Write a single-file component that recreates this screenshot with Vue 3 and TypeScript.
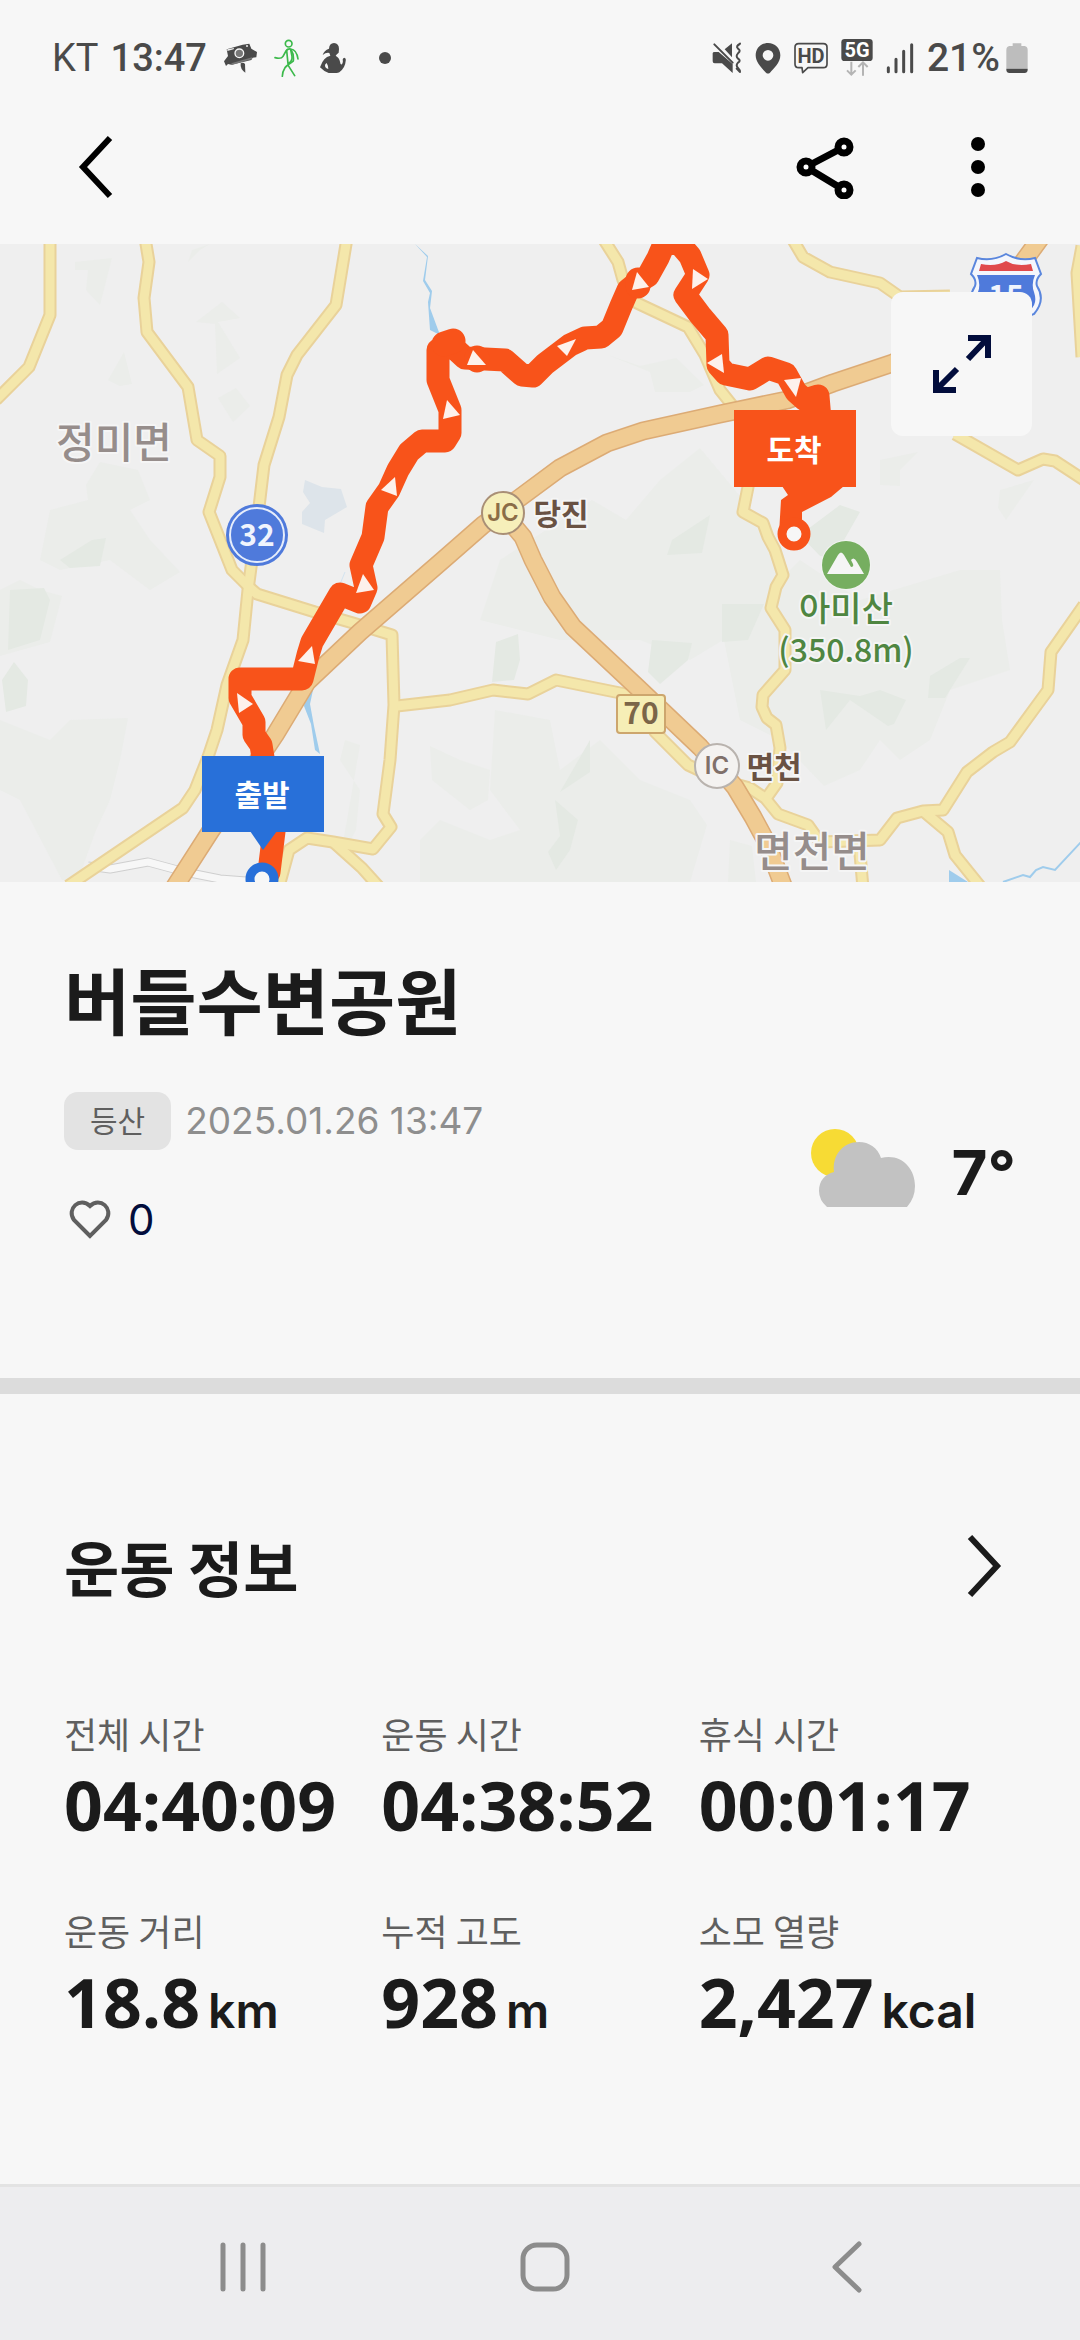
<script setup lang="ts">
interface Stat {
  label: string
  value: string
  unit?: string
}

const stats: Stat[] = [
  { label: '전체 시간', value: '04:40:09' },
  { label: '운동 시간', value: '04:38:52' },
  { label: '휴식 시간', value: '00:01:17' },
  { label: '운동 거리', value: '18.8', unit: 'km' },
  { label: '누적 고도', value: '928', unit: 'm' },
  { label: '소모 열량', value: '2,427', unit: 'kcal' },
]

const hills: string[] = [
  '75,262 112,258 100,305 86,290 88,270 75,270',
  '188,262 192,250 210,244 200,250',
  '196,322 222,302 240,318 218,322 240,358 217,374 215,324',
  '108,380 124,352 132,384 120,386',
  '218,398 236,388 250,406 233,422',
  '86,485 100,462 138,470 150,500 130,510 150,540 180,572 150,590 110,560 60,570 40,560 50,510 88,500',
  '0,590 20,580 40,590 62,596 50,642 0,656',
  '0,720 50,740 70,720 128,718 120,760 110,800 96,830 78,880 62,880 20,800 0,790',
  '608,355 640,366 676,358 704,385 690,392 655,392 650,372',
  '592,500 626,520 660,480 700,448 760,520 790,600 690,660 640,640 560,640 480,620 500,560',
  '880,460 918,452 900,470 900,486 880,485',
  '1000,490 1034,480 1020,500 1006,520 998,508',
  '720,620 770,590 800,560 860,600 960,570 1000,570 1002,620 1010,670 950,690 930,740 900,760 880,740 860,770 824,786 780,740 740,720',
  '430,746 460,760 490,770 488,800 470,810 432,780',
  '495,710 550,720 560,770 600,740 640,780 690,800 707,825 690,882 420,882 420,840 440,820 490,840 520,830 490,790',
  '730,840 752,846 756,882 728,882',
  '340,860 356,830 360,790 340,760 345,740 360,745',
]

const deepHills: string[] = [
  '60,560 92,540 106,538 100,566 70,568',
  '2,680 14,662 28,680 26,706 6,712',
  '10,590 44,588 50,600 40,640 8,650',
  '667,555 672,540 710,515 702,553',
  '496,642 518,634 520,660 514,680 492,682',
  '652,640 692,643 688,660 660,684 648,672',
  '560,792 590,740 590,772',
  '555,800 578,820 570,850 556,870 548,852 560,836',
  '800,535 840,505 860,512 844,540 860,560 820,556',
  '722,604 764,604 748,640 722,642',
  '820,690 860,696 880,690 906,700 894,724 888,726 850,700 826,730',
  '930,676 960,658 970,658 945,698 928,698',
]

const yellowRoads: string[] = [
  'M50 238V315L29 367L-4 400',
  'M145 238L149 262L144 298L147 332L188 387L197 440L220 456V477L209 512L232 570L249 587L257 594L315 612L353 623L392 635L394 705L390 760L383 814L391 827L373 849L333 842L307 838L289 850L278 890',
  'M333 842L362 868L380 888',
  'M347 238L336 305L297 355L287 375L279 417L264 465L259 507L248 590L243 640L227 685L217 730L208 757L195 790L183 808L68 886',
  'M397 706L450 700L493 690L528 694L556 680L640 697L655 732L688 765L720 780L750 788L765 798L778 814L808 825L820 842L880 840L897 818L923 811L943 810L967 772L993 752L1010 742L1048 690L1051 652L1084 605',
  'M923 811L948 832L955 855L980 886',
  'M859 842L863 888',
  'M604 240L618 262L623 280L637 303L688 327L705 355L720 390L732 405L752 440L748 487L743 512L763 523L768 537L775 550L783 575L776 587L771 608L785 630V670L763 695L762 707L767 718L776 725L780 748L777 783L765 800',
  'M793 240L803 257L830 272L880 283L900 297L950 296',
  'M955 434L1018 470L1043 459L1055 461L1084 480',
  'M1082 246L1077 273L1082 357',
]

const orangeRoads: string[] = [
  'M174 888L210 832L275 735L307 682L360 632L443 560L483 525L560 468L607 443L643 431L720 414L787 400L833 383L893 363L960 330L1010 280L1042 236',
  'M503 513L523 537L533 560L552 597L573 627L637 687L700 747L717 766L735 787L753 817L767 843L784 888',
]

/* Direction markers along the route */
const arrows: string[] = [
  '237,693 253,704 239,713',
  '312,646 315,664 298,661',
  '363,574 374,590 356,593',
  '395,477 397,496 381,490',
  '447,400 460,415 443,419',
  '473,350 486,365 467,365',
  '557,346 576,339 567,356',
  '637,272 649,287 632,290',
  '693,269 708,279 692,289',
  '707,363 722,354 724,373',
  '784,380 801,378 796,397',
]
</script>

<template>
  <div class="screen">
    <div class="status">
      <div class="status-side">
        <span class="carrier">KT</span>
        <span class="clock">13:47</span>
        <svg class="cam" width="33" height="32" viewBox="0 0 99 96" aria-hidden="true">
          <path d="M8 22L56 8L76 5L82 20L99 30L97 46L86 47L82 54L22 68L12 66L6 72L0 58L12 42Z" fill="#4a4a4a" />
          <path d="M22 64L84 46V51L24 69Z" fill="#777" />
          <path d="M10 22L30 18L29 22L10 27Z" fill="#eee" />
          <circle cx="46" cy="34" r="13" fill="#777" stroke="#f7f7f7" stroke-width="4" />
          <circle cx="69" cy="12" r="3" fill="#eee" />
          <path d="M50 64Q58 60 63 66L64 92Q48 82 50 64Z" fill="#4a4a4a" />
        </svg>
        <svg class="walk" width="25" height="38" viewBox="0 0 75 114" fill="none" stroke="#3cb94b" stroke-width="5" stroke-linecap="round" stroke-linejoin="round" aria-hidden="true">
          <circle cx="44" cy="14" r="10" />
          <path d="M3 56Q22 61 27 52L36 36Q40 29 50 30Q68 32 72 60" />
          <path d="M38 34L42 74Q56 66 54 52L50 32" />
          <path d="M52 34Q60 46 58 66Q40 78 33 86Q25 98 25 112M43 80L62 110" />
        </svg>
        <svg class="figure" width="27" height="30" viewBox="0 0 81 90" aria-hidden="true">
          <path d="M27 17Q28 1 42 0Q57 1 57 18L56 29Q50 33 47 38Q58 44 60 56Q61 66 66 64Q70 58 68 50Q68 45 73 44Q79 46 77 54Q76 74 58 88Q50 91 40 90H26Q10 84 0 73Q6 56 13 49Q20 40 31 38L28 30Q18 28 8 36Q12 22 27 17ZM16 64Q12 74 25 78Q24 66 20 60Z" fill="#4a4a4a" fill-rule="evenodd" />
        </svg>
        <span class="dot"></span>
      </div>
      <div class="status-side right">
        <svg width="30" height="32" viewBox="0 0 90 96" aria-hidden="true">
          <path d="M2 34Q2 30 8 30H20L62 66V93L30 64H8Q2 64 2 58ZM38 22L60 4V46Z" fill="#4a4a4a" />
          <path d="M7 7L62 62" stroke="#4a4a4a" stroke-width="6" stroke-linecap="round" />
          <path d="M84 5Q70 12 78 20Q88 26 78 34Q70 42 78 50Q88 56 78 62Q70 70 78 78Q84 84 84 90M84 5L76 12M84 90L74 80" fill="none" stroke="#4a4a4a" stroke-width="6" stroke-linecap="round" />
        </svg>
        <svg width="26" height="32" viewBox="0 0 78 96" aria-hidden="true">
          <path d="M39 3C18 3 2 19 2 40C2 62 22 80 33 92Q39 97 45 92C56 80 76 62 76 40C76 19 60 3 39 3ZM39 24A16 16 0 1 1 39 56A16 16 0 1 1 39 24Z" fill="#4a4a4a" fill-rule="evenodd" />
        </svg>
        <svg width="34" height="32" viewBox="0 0 102 96" aria-hidden="true">
          <path d="M14 5H88Q99 5 99 16V66Q99 77 88 77H42L26 92L24 77H14Q3 77 3 66V16Q3 5 14 5Z" fill="none" stroke="#4a4a4a" stroke-width="5" stroke-linejoin="round" />
          <text x="51" y="63" text-anchor="middle" class="hd">HD</text>
        </svg>
        <svg width="32" height="38" viewBox="0 0 96 114" aria-hidden="true">
          <rect x="1" y="0" width="94" height="66" rx="10" fill="#4a4a4a" />
          <text x="48" y="55" text-anchor="middle" class="five">5G</text>
          <path d="M31 68V106M18 94L31 107L44 94M66 110V70M52 84L66 70L80 84" fill="none" stroke="#b4b4b4" stroke-width="6" />
        </svg>
        <svg width="28" height="32" viewBox="0 0 84 96" aria-hidden="true">
          <path d="M7 77V89M30 52V89M53 28V89M77 8V89" stroke="#4a4a4a" stroke-width="9" stroke-linecap="round" />
        </svg>
        <span class="battery">
          21%
          <svg width="22" height="32" viewBox="0 0 66 96" aria-hidden="true">
            <path d="M20 4H46V12H56Q65 14 65 24V80H1V24Q1 14 10 12H20Z" fill="#bdbdbd" />
            <path d="M1 80H65V84Q64 93 56 93H10Q2 93 1 84Z" fill="#4a4a4a" />
          </svg>
        </span>
      </div>
    </div>

    <header class="bar">
      <button type="button" class="icon-btn" aria-label="뒤로">
        <svg width="36" height="64" viewBox="0 0 36 64"><path d="M32 3L5 32L32 61" fill="none" stroke="#000" stroke-width="6" /></svg>
      </button>
      <div class="actions">
        <button type="button" class="icon-btn" aria-label="공유">
          <svg width="60" height="64" viewBox="0 0 60 64" fill="none" stroke="#000">
            <path d="M11 32L49 12M11 32L49 55" stroke-width="7" />
            <g fill="#fff" stroke-width="7">
              <circle cx="11" cy="32" r="6" /><circle cx="49" cy="12" r="6" /><circle cx="49" cy="55" r="6" />
            </g>
          </svg>
        </button>
        <button type="button" class="icon-btn" aria-label="더보기">
          <svg width="14" height="64" viewBox="0 0 14 64"><circle cx="7" cy="9" r="7" /><circle cx="7" cy="32" r="7" /><circle cx="7" cy="55" r="7" /></svg>
        </button>
      </div>
    </header>

    <section class="map">
      <svg class="map-canvas" viewBox="0 244 1080 638" role="img" aria-label="운동 경로 지도">
        <rect y="244" width="1080" height="638" fill="#efefef" />
        <g fill="#ebedea"><polygon v-for="p in hills" :key="p" :points="p" /></g>
        <g fill="#e4e9e3"><polygon v-for="p in deepHills" :key="p" :points="p" /></g>
        <path d="M305 480L322 487L341 489L347 507L325 520L324 533L302 524V512L310 503L303 492Z" fill="#dde4ea" />
        <g fill="#9fccec">
          <path d="M415 244L428 256L425 280L432 291L430 308L440 335L430 330L428 302L430 293L423 281L427 257Z" />
          <path d="M306 690L313 690L310 704L314 726L320 754L315 750L311 724L304 706Z" />
          <path d="M949 870L968 882H949Z" />
        </g>
        <path d="M306 690L315 645L345 572" fill="none" stroke="#d4e4f0" stroke-width="1" />
        <path d="M1003 882L1023 875L1030 877L1036 870L1043 867L1055 870L1082 841" fill="none" stroke="#9fccec" stroke-width="2" />
        <g fill="none" stroke-linejoin="round">
          <path d="M88 866L110 869L148 862L185 872L220 879L260 882" stroke="#cfcfcf" stroke-width="9" />
          <path d="M88 866L110 869L148 862L185 872L220 879L260 882" stroke="#f7f7f7" stroke-width="7" />
          <path v-for="d in yellowRoads" :key="d" :d="d" stroke="#e9d29a" stroke-width="13" />
          <path v-for="d in yellowRoads" :key="'f' + d" :d="d" stroke="#f4e7ab" stroke-width="9" />
          <path v-for="d in orangeRoads" :key="d" :d="d" stroke="#dcab75" stroke-width="19" />
          <path v-for="d in orangeRoads" :key="'f' + d" :d="d" stroke="#f0cb92" stroke-width="16" />
        </g>

        <g class="place">
          <text x="114" y="458" text-anchor="middle">정미면</text>
          <text x="812" y="867" text-anchor="middle">면천면</text>
        </g>
        <g class="junction">
          <text x="561" y="525" text-anchor="middle">당진</text>
          <text x="774" y="778" text-anchor="middle">면천</text>
        </g>
        <g class="peak">
          <circle cx="846" cy="565" r="25" fill="#f3f5f2" />
          <circle cx="846" cy="565" r="24" fill="#76ae60" />
          <path d="M827 574L838 555Q841 550 844 555L851 567Q854 567 853 564L851 560Q854 556 857 562L864 574Z" fill="#f5f5f5" />
          <text class="peak-text" x="846" y="621" text-anchor="middle">아미산</text>
          <text class="peak-text peak-height" x="846" y="662" text-anchor="middle">(350.8m)</text>
        </g>

        <circle cx="257" cy="535" r="31" fill="#4f7adb" />
        <circle cx="257" cy="535" r="27" fill="#4f7adb" stroke="#e6edfb" stroke-width="2" />
        <text class="shield-text" x="257" y="546" text-anchor="middle">32</text>
        <circle cx="503" cy="513" r="21" fill="#f6efba" stroke="#a98f76" stroke-width="2" />
        <text class="jc" x="503" y="521" text-anchor="middle">JC</text>
        <circle cx="717" cy="766" r="22" fill="#f4f2f0" stroke="#b9b3ae" stroke-width="2" />
        <text class="ic" x="717" y="774" text-anchor="middle">IC</text>
        <rect x="617" y="695" width="48" height="38" rx="3" fill="#f6eeb6" stroke="#cda66d" stroke-width="2" />
        <text class="route-no" x="641" y="724" text-anchor="middle">70</text>
        <path d="M977 258Q992 262 1006 254Q1020 262 1035 258L1041 274Q1035 280 1037 286Q1046 300 1034 314L1006 326L978 314Q966 300 975 286Q977 280 971 274Z" fill="#f4f6fc" stroke="#5a86dd" stroke-width="2" />
        <path d="M977 275H1035Q1031 284 1034 292Q1038 304 1030 310L1006 320L982 310Q974 304 978 292Q981 284 977 275Z" fill="#4f7adb" />
        <path d="M979 271L981 264Q996 267 1006 261Q1016 267 1031 264L1033 271Z" fill="#e0494c" />
        <text class="shield-text" x="1006" y="307" text-anchor="middle">15</text>

        <g fill="none" stroke="#f8531a" stroke-linejoin="round" stroke-linecap="round">
          <path d="M269 872L276 815L265 770L261 745L254 735V722L240 698V679H302L308 655L312 642L340 594L360 602L366 588L361 565L373 537L377 507L389 490L398 470L409 452L422 441H445L450 433V410L438 380V350L452 346L465 358L505 360L522 375L533 376L545 364L570 345L585 338L601 337L612 328L621 306L628 290L638 282L648 276L658 258L664 244L678 242L690 256L698 275L685 295L700 315L717 335L718 365L726 374L750 379L768 368L786 374L796 392L805 400L818 396L820 420L838 450" stroke-width="23" />
          <path d="M638 280V286M477 358V360M444 344L453 341" stroke-width="25" />
        </g>
        <path d="M782 486H844L831 497L802 512V526L779 534L781 500L788 495Z" fill="#f8531a" />
        <g fill="#fdf1ec"><polygon v-for="p in arrows" :key="p" :points="p" /></g>
        <circle cx="794" cy="534" r="12" fill="#f7f7f7" stroke="#f8531a" stroke-width="9" />
        <path d="M250 831H277L263 850Z" fill="#2870d9" />
        <circle cx="262" cy="879" r="12" fill="#f7f7f7" stroke="#2870d9" stroke-width="9" />
        <rect x="202" y="756" width="122" height="76" fill="#2870d9" />
        <rect x="734" y="410" width="122" height="77" fill="#f8531a" />
        <g class="pin">
          <text x="262" y="806" text-anchor="middle">출발</text>
          <text x="794" y="461" text-anchor="middle">도착</text>
        </g>
      </svg>
      <button type="button" class="expand" aria-label="지도 확대">
        <svg width="60" height="60" viewBox="0 0 60 60" fill="none" stroke="#020d3c" stroke-width="6">
          <path d="M36 4H56V24M55 5L36 25M4 36V56H24M5 55L25 35" />
        </svg>
      </button>
    </section>

    <section class="info">
      <h1>버들수변공원</h1>
      <div class="info-body">
        <div class="meta">
          <div class="meta-line">
            <span class="tag">등산</span>
            <time datetime="2025-01-26T13:47">2025.01.26 13:47</time>
          </div>
          <button type="button" class="like" aria-label="좋아요 0">
            <svg width="44" height="42" viewBox="0 0 44 42"><path d="M22 37L6 21C-2 10 12 -3 22 7C32 -3 46 10 38 21Z" fill="none" stroke="#5f5f5f" stroke-width="4" /></svg>
            <span>0</span>
          </button>
        </div>
        <div class="weather">
          <svg width="104" height="78" viewBox="0 0 104 78" aria-hidden="true">
            <circle cx="24" cy="24" r="24" fill="#f7db34" />
            <path d="M16 78Q8 71 8 62C8 52 14 45 23 43C21 26 32 13 48 13C58 13 67 19 70 29C90 24 104 39 104 57Q104 69 96 78Z" fill="#c2c2c2" />
          </svg>
          <span class="temp">7°</span>
        </div>
      </div>
    </section>

    <section class="workout">
      <div class="workout-head">
        <h2>운동 정보</h2>
        <button type="button" class="more" aria-label="운동 정보 더보기">
          <svg width="36" height="64" viewBox="0 0 36 64"><path d="M4 3L31 32L4 61" fill="none" stroke="#1b1b1b" stroke-width="6" /></svg>
        </button>
      </div>
      <dl class="stats">
        <div v-for="s in stats" :key="s.label" class="stat">
          <dt>{{ s.label }}</dt>
          <dd><span>{{ s.value }}</span><small v-if="s.unit">{{ s.unit }}</small></dd>
        </div>
      </dl>
    </section>

    <nav class="nav">
      <button type="button" aria-label="최근 앱">
        <svg width="50" height="52" viewBox="0 0 50 52"><path d="M5 4V48M25 4V48M45 4V48" stroke="#8c8c8c" stroke-width="5" stroke-linecap="round" /></svg>
      </button>
      <button type="button" aria-label="홈">
        <svg width="52" height="52" viewBox="0 0 52 52"><rect x="4" y="4" width="44" height="44" rx="14" fill="none" stroke="#8c8c8c" stroke-width="5" /></svg>
      </button>
      <button type="button" aria-label="뒤로 가기">
        <svg width="34" height="52" viewBox="0 0 34 52"><path d="M29 3L5 26L29 49" fill="none" stroke="#8c8c8c" stroke-width="5" stroke-linecap="round" stroke-linejoin="round" /></svg>
      </button>
    </nav>
  </div>
</template>

<style>
body {
  background: #f7f7f7;
}
</style>

<style scoped>
.screen {
  display: flex;
  flex-direction: column;
  min-height: 100vh;
  background: #f7f7f7;
  color: #1b1b1b;
  font-family: Inter, "Noto Sans CJK KR", sans-serif;
}
svg {
  display: block;
  flex: none;
}
button {
  border: 0;
  padding: 0;
  background: none;
  color: inherit;
  font: inherit;
}

/* Device status bar */
.status {
  display: flex;
  justify-content: space-between;
  align-items: center;
  height: 64px;
  padding: 26px 52px 0;
  color: #4a4a4a;
  font-family: Roboto, sans-serif;
  font-size: 39px;
  font-weight: 500;
  line-height: 48px;
}
.status-side {
  display: flex;
  align-items: center;
}
.status-side.right {
  gap: 13px;
}
.carrier {
  font-weight: 400;
  font-size: 38px;
}
.clock {
  margin-left: 12px;
  font-size: 38px;
}
.cam,
.walk {
  margin-left: 17px;
}
.figure {
  margin-left: 21px;
}
.dot {
  width: 12px;
  height: 12px;
  margin-left: 32px;
  border-radius: 50%;
  background: #4a4a4a;
}
.battery {
  display: flex;
  align-items: center;
  gap: 6px;
}
.hd,
.five {
  font-family: Roboto, sans-serif;
  font-size: 60px;
  font-weight: 700;
  fill: #4a4a4a;
}
.five {
  fill: #fff;
}

/* App bar */
.bar {
  display: flex;
  justify-content: space-between;
  align-items: center;
  height: 154px;
  padding: 0 54px 0 48px;
}
.icon-btn {
  display: grid;
  place-items: center;
  width: 96px;
  height: 96px;
}
.actions {
  display: flex;
  gap: 57px;
}

/* Route map */
.map {
  position: relative;
}
.map-canvas {
  width: 100%;
  height: auto;
  font-family: "Noto Sans CJK KR", sans-serif;
}
.expand {
  position: absolute;
  top: 48px;
  right: 48px;
  display: grid;
  place-items: center;
  width: 141px;
  height: 144px;
  border-radius: 12px;
  background: #f7f7f7;
}
.place,
.junction,
.peak-text {
  paint-order: stroke;
  stroke: #f5f5f5;
  stroke-width: 4px;
  stroke-linejoin: round;
}
.place {
  font-size: 42px;
  font-weight: 500;
  fill: #968d8b;
}
.junction {
  font-size: 30px;
  font-weight: 700;
  fill: #6a5243;
}
.peak-text {
  font-size: 34px;
  font-weight: 500;
  fill: #4f8641;
}
.peak-height {
  font-size: 32px;
}
.shield-text {
  font-size: 30px;
  font-weight: 700;
  fill: #f0f4fd;
}
.jc,
.ic {
  font-family: Inter, sans-serif;
  font-size: 24px;
  font-weight: 600;
  fill: #8b6d47;
}
.ic {
  fill: #80706a;
}
.route-no {
  font-size: 30px;
  font-weight: 700;
  fill: #7b6548;
}
.pin {
  font-size: 30px;
  font-weight: 700;
  fill: #fff;
}

/* Activity summary */
.info {
  padding: 74px 64px 134px;
  border-bottom: 16px solid #dcdcdc;
}
h1 {
  margin: 0 0 52px;
  font-family: "Noto Sans CJK KR", sans-serif;
  font-size: 72px;
  font-weight: 700;
  line-height: 84px;
}
.info-body {
  display: flex;
  justify-content: space-between;
  align-items: center;
}
.meta-line {
  display: flex;
  align-items: center;
  gap: 14px;
  margin-bottom: 46px;
}
.tag {
  padding: 0 26px;
  border-radius: 14px;
  background: #e3e3e3;
  color: #5f5f5f;
  font-size: 30px;
  line-height: 58px;
}
time {
  color: #8e8e8e;
  font-size: 37px;
  line-height: 58px;
}
.like {
  display: flex;
  align-items: center;
  gap: 16px;
  padding-left: 4px;
  color: #020d3c;
  font-size: 42px;
  line-height: 48px;
}
.weather {
  display: flex;
  align-items: center;
  gap: 36px;
}
.temp {
  padding-top: 10px;
  font-size: 62px;
  font-weight: 700;
  line-height: 72px;
}

/* Workout figures */
.workout {
  padding: 136px 64px 96px;
}
.workout-head {
  display: flex;
  justify-content: space-between;
  align-items: center;
  margin-bottom: 107px;
}
h2 {
  margin: 0;
  font-family: "Noto Sans CJK KR", sans-serif;
  font-size: 60px;
  font-weight: 700;
  line-height: 72px;
}
.more {
  padding-right: 14px;
}
.stats {
  display: grid;
  grid-template-columns: repeat(3, 1fr);
  row-gap: 63px;
  margin: 0;
}
dt {
  margin-bottom: 10px;
  color: #5f5f5f;
  font-family: "Noto Sans CJK KR", sans-serif;
  font-size: 36px;
  line-height: 48px;
}
dd {
  display: flex;
  align-items: baseline;
  gap: 8px;
  margin: 0;
  font-family: "Open Sans", sans-serif;
  font-size: 68px;
  font-weight: 700;
  line-height: 76px;
  white-space: nowrap;
}
dd small {
  font-family: Inter, sans-serif;
  font-size: 48px;
  font-weight: 600;
}

/* System navigation */
.nav {
  display: grid;
  grid-template-columns: repeat(3, 1fr);
  height: 147px;
  margin-top: auto;
  padding: 6px 82px 0 92px;
  border-top: 3px solid #e3e3e3;
  background: #ededef;
}
.nav button {
  display: grid;
  place-items: center;
}
</style>
